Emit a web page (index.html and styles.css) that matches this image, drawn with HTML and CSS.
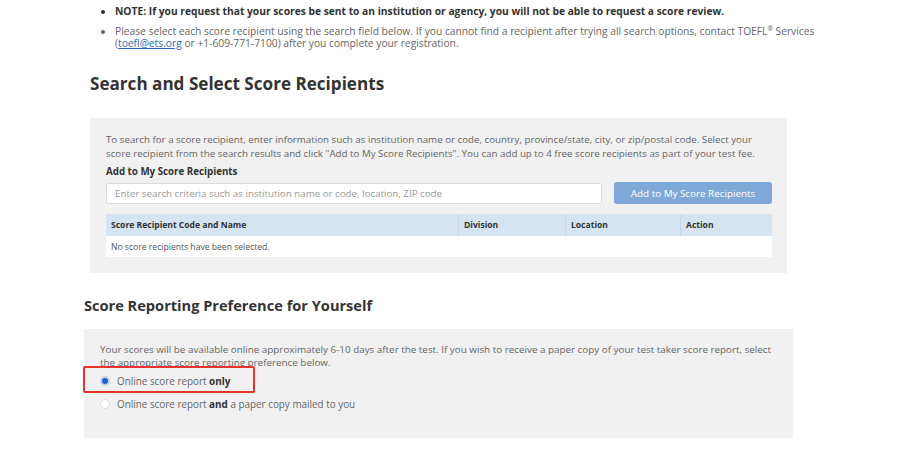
FILE: index.html
```html
<!DOCTYPE html>
<html lang="en">
<head>
    <meta charset="UTF-8">
    <meta name="viewport" content="width=device-width, initial-scale=1.0">
    <title>Score Recipients</title>
    <link rel="stylesheet" href="styles.css">
</head>
<body>
    <ul class="notes">
        <li class="note-strong">NOTE: If you request that your scores be sent to an institution or agency, you will not be able to request a score review.</li>
        <li>Please select each score recipient using the search field below. If you cannot find a recipient after trying all search options, contact TOEFL<sup>®</sup> Services (<a href="#">toefl@ets.org</a> or +1-609-771-7100) after you complete your registration.</li>
    </ul>

    <div class="recipients">
        <h2 class="title">Search and Select Score Recipients</h2>
        <div class="panel">
            <p class="intro">To search for a score recipient, enter information such as institution name or code, country, province/state, city, or zip/postal code. Select your score recipient from the search results and click "Add to My Score Recipients". You can add up to 4 free score recipients as part of your test fee.</p>
            <div class="field-label">Add to My Score Recipients</div>
            <div class="search-row">
                <input type="text" class="search" placeholder="Enter search criteria such as institution name or code, location, ZIP code">
                <button class="add-btn">Add to My Score Recipients</button>
            </div>
            <table class="list">
                <thead>
                    <tr>
                        <th class="c-name">Score Recipient Code and Name</th>
                        <th class="c-div">Division</th>
                        <th class="c-loc">Location</th>
                        <th class="c-act">Action</th>
                    </tr>
                </thead>
                <tbody>
                    <tr>
                        <td colspan="4">No score recipients have been selected.</td>
                    </tr>
                </tbody>
            </table>
        </div>
    </div>

    <div class="preference">
        <h3 class="subtitle">Score Reporting Preference for Yourself</h3>
        <div class="panel panel-pref">
            <p class="intro">Your scores will be available online approximately 6-10 days after the test. If you wish to receive a paper copy of your test taker score report, select the appropriate score reporting preference below.</p>
            <label class="option">
                <span class="radio checked"></span>
                <span>Online score report <b>only</b></span>
                <span class="highlight"></span>
            </label>
            <label class="option">
                <span class="radio"></span>
                <span>Online score report <b>and</b> a paper copy mailed to you</span>
            </label>
        </div>
    </div>
</body>
</html>
```

FILE: styles.css
```css
/* page */
body {
    margin: 0;
    background: #fff;
    color: #666;
    font-family: 'Open Sans', 'Noto Sans', sans-serif;
    font-size: 10.25px;
}

/* top notes */
.notes {
    margin: 0;
    padding: 5px 0 0 115px;
    width: 700px;
    line-height: 12px;
}

.notes li {
    margin-bottom: 8px;
}

.note-strong {
    color: #333;
    font-weight: 700;
}

.notes sup {
    font-size: 6.5px;
    line-height: 1;
    vertical-align: 4px;
}

.notes a {
    color: #2a6db5;
}

/* search section */
.recipients {
    margin-left: 90px;
    width: 697px;
}

.title {
    margin: 27px 0 0;
    height: 42px;
    color: #333;
    font-size: 17.1px;
    font-weight: 700;
    line-height: 16px;
}

.panel {
    background: #f1f1f1;
    padding: 15px 15px 16px 16px;
}

.intro {
    margin: 0;
    font-size: 9.75px;
    line-height: 14px;
}

.field-label {
    margin-top: 4px;
    color: #333;
    font-size: 9.75px;
    font-weight: 700;
    line-height: 14px;
}

.search-row {
    display: flex;
    align-items: center;
    gap: 12px;
    margin-top: 3px;
}

.search {
    flex: 0 0 496px;
    box-sizing: border-box;
    height: 21px;
    margin: 0;
    padding: 0 8px;
    border: 1px solid #dcdcdc;
    border-radius: 2px;
    background: #fff;
    font-family: inherit;
    font-size: 9.75px;
    color: #555;
}

.search::placeholder {
    color: #999;
}

.add-btn {
    flex: 1;
    height: 22px;
    border: none;
    border-radius: 3px;
    background: #7fa8d8;
    color: #fff;
    font-family: inherit;
    font-size: 9.85px;
}

/* table */
.list {
    width: 100%;
    margin-top: 10px;
    border-collapse: collapse;
}

.list th {
    height: 22px;
    padding: 0 5px;
    background: #d6e3f0;
    color: #333;
    font-size: 8.55px;
    font-weight: 700;
    text-align: left;
    border-left: 1px solid #c8d7e7;
}

.list th:first-child {
    border-left: none;
}

.c-name { width: 342px; }
.c-div { width: 96px; }
.c-loc { width: 104px; }

.list td {
    height: 21px;
    padding: 0 5px;
    background: #fff;
    color: #555;
    font-size: 8.6px;
}

/* preference section */
.preference {
    margin: 23px 0 0 84px;
    width: 709px;
}

.subtitle {
    margin: 0;
    height: 33px;
    color: #333;
    font-size: 14.6px;
    font-weight: 700;
    line-height: 18px;
}

.panel-pref {
    padding: 14px 16px 23px 16px;
}

.panel-pref .intro {
    font-size: 9.85px;
    line-height: 13px;
}

.option {
    position: relative;
    display: flex;
    align-items: center;
    gap: 7px;
    height: 23px;
    font-size: 9.9px;
}

.option b {
    color: #333;
}

.radio {
    width: 10px;
    height: 10px;
    box-sizing: border-box;
    border-radius: 50%;
    border: 1px solid #ddd;
    background: #fff;
}

.radio.checked {
    border: 2px solid #c5d4e8;
    background: #1e63c9;
}

/* red annotation box */
.highlight {
    position: absolute;
    left: -17px;
    top: -3px;
    width: 172px;
    height: 27px;
    box-sizing: border-box;
    border: 2px solid #e8322c;
    border-radius: 2px;
}
```
